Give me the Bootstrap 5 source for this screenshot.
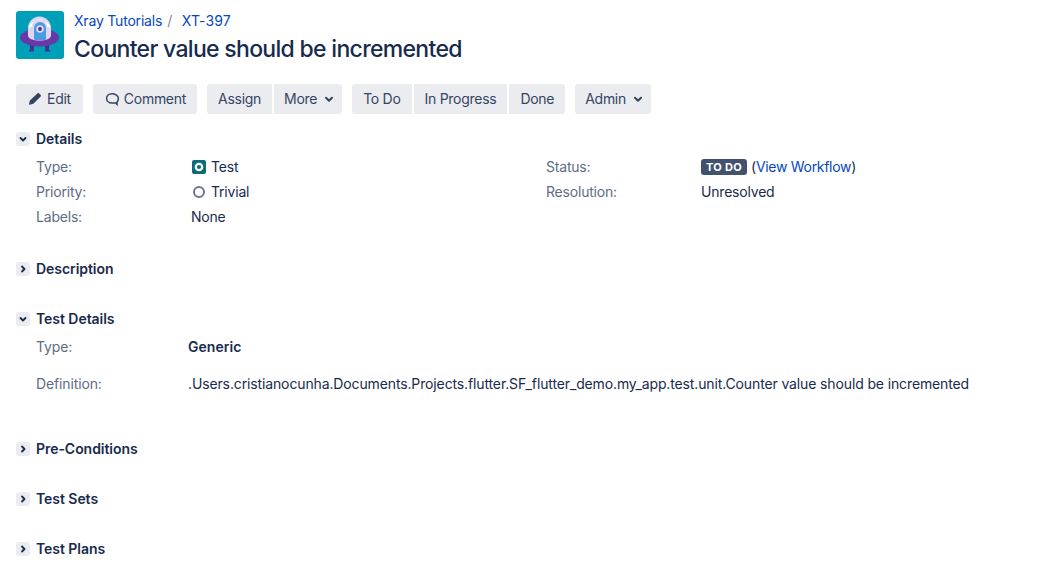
<!DOCTYPE html>
<html lang="en">

<head>
  <meta charset="UTF-8">
  <meta name="viewport" content="width=device-width, initial-scale=1.0">
  <title>XT-397 - Counter value should be incremented</title>
  <link href="https://cdn.jsdelivr.net/npm/bootstrap@5.3.0/dist/css/bootstrap.min.css" rel="stylesheet">
  <style>
    html, body { height: 574px; overflow: hidden; }
    body { font-family: Inter, "Liberation Sans", sans-serif; font-size: 14px; line-height: 20px; letter-spacing: -0.13px; color: #172b4d; background: #fff; padding: 11px 16px 0; }
    a { color: #0747c0; text-decoration: none; }
    .issue-avatar { width: 48px; height: 48px; flex: none; }
    .issue-text { margin-left: 10px; }
    .crumbs { height: 20px; letter-spacing: -0.2px; }
    .crumb-sep { color: #7a869a; padding: 0 6px 0 5px; }
    .issue-key { letter-spacing: 0.15px; }
    .issue-title { font-size: 23px; line-height: 28px; font-weight: 500; letter-spacing: -0.69px; margin: 4px 0 0; color: #172b4d; }
    .toolbar { margin-top: 21px; height: 30px; }
    .tool-btn { background: #ebecf0; color: #344563; border: 0; border-radius: 0; height: 30px; padding: 0 11px; font-size: 14px; line-height: 30px; letter-spacing: -0.28px; display: flex; align-items: center; gap: 4px; }
    .tool-btn:first-child { border-top-left-radius: 3px; border-bottom-left-radius: 3px; }
    .tool-btn:last-child { border-top-right-radius: 3px; border-bottom-right-radius: 3px; }
    .tool-btn.has-caret { padding: 0 5px 0 10px; }
    .tool-btn.edit-btn { padding-right: 12px; }
    .tool-group { display: flex; gap: 2px; margin-right: 10px; }
    .mod-head { height: 20px; font-weight: 600; letter-spacing: -0.05px; color: #172b4d; gap: 6px; }
    .mod-toggle { width: 14px; height: 14px; background: #ebecf0; border-radius: 3px; display: flex; align-items: center; justify-content: center; flex: none; }
    .mod-head.top-mod { margin-top: 15px; }
    .mod-head.closed-mod { margin-top: 30px; }
    .mod-head.after-fields { margin-top: 30px; }
    .mod-head.after-test { margin-top: 45px; }
    .field-list { margin: 5px 0 0 20px; letter-spacing: -0.2px; }
    .field-row { height: 25px; display: flex; line-height: 25px; }
    .field-label { color: #5e6c84; width: 155px; flex: none; }
    .field-half { width: 510px; display: flex; flex: none; }
    .field-icon { width: 16px; height: 16px; margin-right: 4px; flex: none; align-self: center; }
    .status-pill { background: #42526e; color: #fff; font-size: 11px; font-weight: 700; line-height: 16px; height: 16px; padding: 0 5px; border-radius: 3px; letter-spacing: 0.3px; align-self: center; margin-right: 4px; }
    .workflow-link { letter-spacing: -0.3px; }
    .test-rows { margin: 8px 0 0 20px; }
    .test-row { display: flex; line-height: 20px; }
    .test-row .field-label { width: 152px; }
    .test-row + .test-row { margin-top: 17px; }
    .test-kind { font-weight: 600; letter-spacing: 0.05px; }
  </style>
</head>

<body>
  <!-- Cabecera -->
  <div class="d-flex align-items-start">
    <div class="issue-avatar">
      <svg width="48" height="48" viewBox="0 0 48 48">
        <rect width="48" height="48" rx="3" fill="#009fb8" />
        <path d="M14 33h4.500l-1 6h.5v1.500h-5V39h1z M33 33h-4.500l1 6H29v1.500h5V39h-1z" fill="#403294" />
        <ellipse cx="23.500" cy="26.500" rx="19.500" ry="9" fill="#6938a8" />
        <path d="M12 17.500 a11.500 12 0 0 1 23 0 v7 c0 3-5 5-11.500 5 s-11.500-2-11.500-5z" fill="#dcd6f2" />
        <path d="M12.500 16 a11.500 10 0 0 1 22 0 c-1 1-2.500 0-3.500-1 a7 6 0 0 0-15 0 c-1 1-2.500 2-3.500 1z" fill="#fff" />
        <path d="M18 17 a6 6 0 0 1 12 0 v10.500 c0 .8-.7 1.500-1.500 1.500 h-9 c-.8 0-1.500-.7-1.500-1.500z" fill="#4c9ae0" />
        <circle cx="24" cy="18" r="3.800" fill="#dcd6f2" />
        <circle cx="24" cy="18" r="1.900" fill="#403294" />
      </svg>
    </div>
    <div class="issue-text">
      <div class="crumbs"><a href="#">Xray Tutorials</a><span class="crumb-sep">/</span> <a href="#" class="issue-key">XT-397</a></div>
      <h1 class="issue-title">Counter value should be incremented</h1>
    </div>
  </div>

  <!-- Botones -->
  <div class="toolbar d-flex">
    <div class="tool-group">
      <button class="tool-btn edit-btn">
        <svg width="16" height="16" viewBox="0 0 16 16"><path d="M10.600 2.300a1 1 0 0 1 1.400 0l1.700 1.700a1 1 0 0 1 0 1.400l-7.400 7.400-3.700.9a.5.5 0 0 1-.6-.6l.9-3.700z" fill="#344563" /></svg>
        Edit
      </button>
    </div>
    <div class="tool-group">
      <button class="tool-btn">
        <svg width="16" height="16" viewBox="0 0 16 16" fill="none"><path d="M8 2.800c-3.200 0-5.400 2-5.400 4.600S4.800 12 8 12h3.600l1.400 1.400V11c.9-.9 1.400-2.200 1.400-3.600 0-2.600-3.200-4.600-6.400-4.600z" stroke="#344563" stroke-width="1.500" /></svg>
        Comment
      </button>
    </div>
    <div class="tool-group">
      <button class="tool-btn">Assign</button>
      <button class="tool-btn has-caret">More
        <svg width="16" height="16" viewBox="0 0 16 16" fill="none"><path d="M5 6.800l3 3 3-3" stroke="#344563" stroke-width="2" stroke-linecap="round" stroke-linejoin="round" /></svg>
      </button>
    </div>
    <div class="tool-group">
      <button class="tool-btn">To Do</button>
      <button class="tool-btn">In Progress</button>
      <button class="tool-btn">Done</button>
    </div>
    <div class="tool-group">
      <button class="tool-btn has-caret">Admin
        <svg width="16" height="16" viewBox="0 0 16 16" fill="none"><path d="M5 6.800l3 3 3-3" stroke="#344563" stroke-width="2" stroke-linecap="round" stroke-linejoin="round" /></svg>
      </button>
    </div>
  </div>

  <!-- Details -->
  <div class="mod-head top-mod d-flex align-items-center">
    <span class="mod-toggle"><svg width="10" height="10" viewBox="0 0 10 10" fill="none"><path d="M2.500 4l2.500 2.500L7.500 4" stroke="#172b4d" stroke-width="1.800" stroke-linecap="round" stroke-linejoin="round" /></svg></span>
    Details
  </div>
  <div class="field-list">
    <div class="field-row">
      <div class="field-half">
        <span class="field-label">Type:</span>
        <svg class="field-icon" viewBox="0 0 16 16"><rect x="1" y="1" width="14" height="14" rx="2" fill="#0e6b7a" /><circle cx="8" cy="8" r="3.200" fill="none" stroke="#fff" stroke-width="2.200" /></svg>
        <span>Test</span>
      </div>
      <span class="field-label">Status:</span>
      <span class="status-pill">TO DO</span>
      <span>(<a href="#" class="workflow-link">View Workflow</a>)</span>
    </div>
    <div class="field-row">
      <div class="field-half">
        <span class="field-label">Priority:</span>
        <svg class="field-icon" viewBox="0 0 16 16"><circle cx="8" cy="8" r="5" fill="none" stroke="#6b778c" stroke-width="2" /></svg>
        <span>Trivial</span>
      </div>
      <span class="field-label">Resolution:</span>
      <span>Unresolved</span>
    </div>
    <div class="field-row">
      <span class="field-label">Labels:</span>
      <span>None</span>
    </div>
  </div>

  <div class="mod-head after-fields d-flex align-items-center">
    <span class="mod-toggle"><svg width="10" height="10" viewBox="0 0 10 10" fill="none"><path d="M4 2.500L6.500 5 4 7.500" stroke="#172b4d" stroke-width="1.800" stroke-linecap="round" stroke-linejoin="round" /></svg></span>
    Description
  </div>

  <!-- Test Details -->
  <div class="mod-head closed-mod d-flex align-items-center">
    <span class="mod-toggle"><svg width="10" height="10" viewBox="0 0 10 10" fill="none"><path d="M2.500 4l2.500 2.500L7.500 4" stroke="#172b4d" stroke-width="1.800" stroke-linecap="round" stroke-linejoin="round" /></svg></span>
    Test Details
  </div>
  <div class="test-rows">
    <div class="test-row">
      <span class="field-label">Type:</span>
      <span class="test-kind">Generic</span>
    </div>
    <div class="test-row">
      <span class="field-label">Definition:</span>
      <span>.Users.cristianocunha.Documents.Projects.flutter.SF_flutter_demo.my_app.test.unit.Counter value should be incremented</span>
    </div>
  </div>

  <div class="mod-head after-test d-flex align-items-center">
    <span class="mod-toggle"><svg width="10" height="10" viewBox="0 0 10 10" fill="none"><path d="M4 2.500L6.500 5 4 7.500" stroke="#172b4d" stroke-width="1.800" stroke-linecap="round" stroke-linejoin="round" /></svg></span>
    Pre-Conditions
  </div>
  <div class="mod-head closed-mod d-flex align-items-center">
    <span class="mod-toggle"><svg width="10" height="10" viewBox="0 0 10 10" fill="none"><path d="M4 2.500L6.500 5 4 7.500" stroke="#172b4d" stroke-width="1.800" stroke-linecap="round" stroke-linejoin="round" /></svg></span>
    Test Sets
  </div>
  <div class="mod-head closed-mod d-flex align-items-center">
    <span class="mod-toggle"><svg width="10" height="10" viewBox="0 0 10 10" fill="none"><path d="M4 2.500L6.500 5 4 7.500" stroke="#172b4d" stroke-width="1.800" stroke-linecap="round" stroke-linejoin="round" /></svg></span>
    Test Plans
  </div>
</body>

</html>
